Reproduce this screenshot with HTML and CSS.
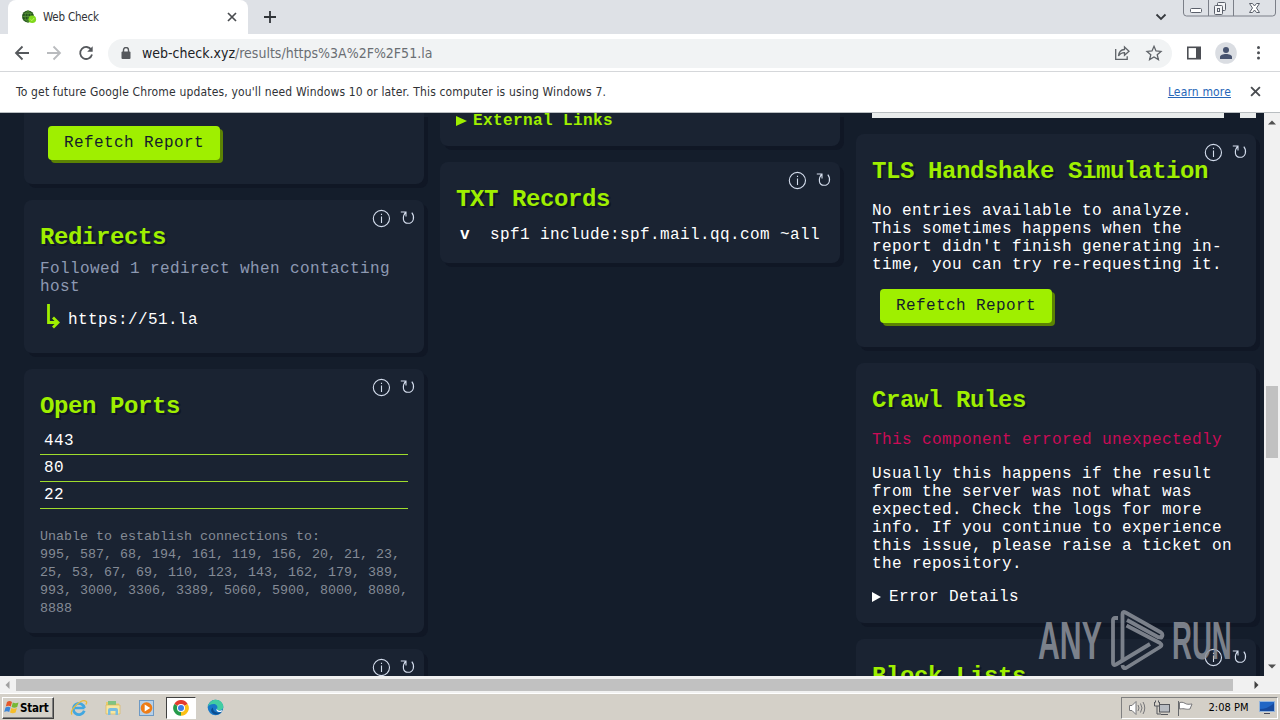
FILE: index.html
```html
<!DOCTYPE html>
<html lang="en">
<head>
  <meta charset="UTF-8" />
  <meta name="viewport" content="width=device-width, initial-scale=1.0"/>
  <title>Web Check</title>
  <link rel="stylesheet" href="styles.css">
</head>
<body>

  <!-- shared icons -->
  <svg class="defs" width="0" height="0">
    <symbol id="card-tools" viewBox="0 0 44 20">
      <g fill="none" stroke="#d3dcec" stroke-width="1.1">
        <circle cx="9.4" cy="9.5" r="8.1"/>
        <path d="M9.5 7.500v6.500M9.5 4.800v1.300"/>
        <path d="M33.800 3.200C30 7.500 30.500 14.300 36 14.300c5.800 0 7-6.500 3.800-10.600M28.800 3h5.200v4.500"/>
      </g>
    </symbol>
    <symbol id="cross" viewBox="0 0 10 10">
      <path d="M1 1l8 8M9 1l-8 8" stroke="#494c50" stroke-width="1.7" fill="none"/>
    </symbol>
  </svg>

  <div class="tab-strip">
    <div class="tab">
      <svg class="favicon" width="16" height="16" viewBox="0 0 16 16">
        <circle cx="7" cy="7.500" r="6" fill="#24521d"/>
        <path d="M1 7.500h12M7 1.500v12M2.500 4.300h9M2.500 10.800h9M7 1.500c-4 3-4 9 0 12c4-3 4-9 0-12" stroke="#5d9c3b" stroke-width=".7" fill="none"/>
        <circle cx="11.300" cy="10.300" r="3.800" fill="#80d81c"/>
        <path d="M9.500 10.400l1.400 1.300l2.300-2.700" stroke="#b9f75c" fill="none"/>
      </svg>
      <span class="tab-title">Web Check</span>
      <svg width="10" height="10"><use href="#cross"/></svg>
    </div>
    <svg class="new-tab" width="12" height="12" viewBox="0 0 12 12"><path d="M6 0v12M0 6h12" stroke="#303439" stroke-width="1.8"/></svg>
    <svg class="tab-search" width="12" height="8" viewBox="0 0 12 8"><path d="M1.500 1.500L6 6l4.500-4.500" stroke="#36393e" stroke-width="1.800" fill="none"/></svg>
    <div class="window-buttons">
      <svg width="93" height="17" viewBox="0 0 93 17" fill="none" stroke="#7b7f88">
        <path d="M.5 0v13q0 3 3 3h86q3 0 3-3V0M25.500 0v16M50.500 0v16"/>
        <rect x="7.500" y="8.500" width="11" height="4" rx="1" fill="#fff" stroke="#5b606b"/>
        <g stroke="#5b606b" fill="#f3f4f6"><rect x="34.500" y="2.500" width="8" height="8" rx="1"/><rect x="31.500" y="5.500" width="8" height="9" rx="1"/><rect x="34.500" y="8.500" width="2" height="3"/></g>
        <path d="M66.500 3.500h3l2 2.500l2-2.500h3l-3 4.500l3 4.500h-3l-2-2.500l-2 2.500h-3l3-4.500z" fill="#fff" stroke="#5b606b"/>
      </svg>
    </div>
  </div>

  <div class="toolbar">
    <svg width="108" height="36" viewBox="0 0 108 36" fill="none" stroke="#55585c" stroke-width="1.800">
      <path d="M29 18H16.500M22.500 11.500L16 18l6.500 6.500"/>
      <path d="M47 18h12.500M53.500 11.500L60 18l-6.500 6.500" stroke="#b9bbbe"/>
      <path d="M91.300 14.800A6 6 0 1 0 92 19.500"/>
      <path d="M92.700 11.200v5.500h-5.500z" fill="#55585c" stroke="none"/>
    </svg>
    <div class="address">
      <svg class="lock" width="10" height="12" viewBox="0 0 10 12"><path d="M2.500 5V3a2.500 2.500 0 0 1 5 0v2" fill="none" stroke="#55585c" stroke-width="1.400"/><rect x=".5" y="4.500" width="9" height="7.500" rx="1" fill="#55585c"/></svg>
      <span class="url">web-check.xyz<span class="path">/results/https%3A%2F%2F51.la</span></span>
      <svg class="address-icons" width="50" height="18" viewBox="0 0 50 18" fill="none" stroke="#5f6368" stroke-width="1.300">
        <path d="M1.700 5v10.300h11.500v-3M4.500 12c.4-4 2.500-6.300 6-6.500V3l4.500 4.200l-4.500 4V8.700c-2.500 0-4.500 1-6 3.300z"/>
        <path d="M40 2.300l2 4.600l5 .5l-3.800 3.300l1.200 4.900l-4.400-2.600l-4.400 2.600l1.200-4.900L33 7.400l5-.5z"/>
      </svg>
    </div>
    <svg width="108" height="36" viewBox="0 0 108 36">
      <rect x="15.800" y="12.300" width="12.400" height="11.400" fill="none" stroke="#4c4f54" stroke-width="1.600"/><path d="M24 12h4.500v12H24z" fill="#4c4f54"/>
      <circle cx="54" cy="18" r="10.800" fill="#dadde2"/><circle cx="54" cy="15" r="3" fill="#47536f"/><path d="M48 24v-2c0-4 12-4 12 0v2z" fill="#47536f"/>
      <g fill="#4c4f54"><circle cx="86.500" cy="12.500" r="1.500"/><circle cx="86.500" cy="17.800" r="1.500"/><circle cx="86.500" cy="23" r="1.500"/></g>
    </svg>
  </div>

  <div class="infobar">
    <span class="info-text">To get future Google Chrome updates, you'll need Windows 10 or later. This computer is using Windows 7.</span>
    <a class="learn">Learn more</a>
    <svg width="11" height="11"><use href="#cross"/></svg>
  </div>

  <div class="viewport">
    <main class="results">
      <div class="column">
        <section class="card cut-refetch">
          <button class="refetch">Refetch Report</button>
        </section>

        <section class="card redirects">
          <svg class="tools" width="44" height="20"><use href="#card-tools"/></svg>
          <h2>Redirects</h2>
          <p class="note">Followed 1 redirect when contacting host</p>
          <div class="redirect">
            <svg width="14" height="27" viewBox="0 0 14 27"><path d="M2.500 1v18.500H11M7 14.500l5 5l-5 5" fill="none" stroke="#9fef00" stroke-width="2.800"/></svg>
            <span>https://51.la</span>
          </div>
        </section>

        <section class="card ports">
          <svg class="tools" width="44" height="20"><use href="#card-tools"/></svg>
          <h2>Open Ports</h2>
          <div class="port">443</div>
          <div class="port">80</div>
          <div class="port">22</div>
          <p class="closed">Unable to establish connections to:<br>
            995, 587, 68, 194, 161, 119, 156, 20, 21, 23, 25, 53, 67, 69, 110, 123, 143, 162, 179, 389, 993, 3000, 3306, 3389, 5060, 5900, 8000, 8080, 8888</p>
        </section>

        <section class="card next">
          <svg class="tools" width="44" height="20"><use href="#card-tools"/></svg>
        </section>
      </div>

      <div class="column">
        <section class="card cut-links">
          <div class="summary"><svg width="12" height="12" viewBox="0 0 12 12"><path d="M0 1l11 5L0 11z" fill="#9fef00"/></svg>External Links</div>
        </section>

        <section class="card txt">
          <svg class="tools" width="44" height="20"><use href="#card-tools"/></svg>
          <h2>TXT Records</h2>
          <div class="record"><b>v</b><span>spf1 include:spf.mail.qq.com ~all</span></div>
        </section>
      </div>

      <div class="column">
        <div class="shot"><span class="shot-main"></span><span class="shot-side"></span></div>

        <section class="card tls">
          <svg class="tools" width="44" height="20"><use href="#card-tools"/></svg>
          <h2>TLS Handshake Simulation</h2>
          <p>No entries available to analyze.<br>This sometimes happens when the report didn't finish generating in-time, you can try re-requesting it.</p>
          <button class="refetch">Refetch Report</button>
        </section>

        <section class="card crawl">
          <h2>Crawl Rules</h2>
          <p class="error">This component errored unexpectedly</p>
          <p>Usually this happens if the result from the server was not what was expected. Check the logs for more info. If you continue to experience this issue, please raise a ticket on the repository.</p>
          <div class="details"><svg width="10" height="10" viewBox="0 0 10 10"><path d="M0 0l9 5L0 10z" fill="#fff"/></svg>Error Details</div>
        </section>

        <section class="card next">
          <svg class="tools" width="44" height="20"><use href="#card-tools"/></svg>
          <h2>Block Lists</h2>
        </section>
      </div>
    </main>

    <div class="scroll-y">
      <svg width="8" height="5" viewBox="0 0 8 5"><path d="M0 4.500L4 .5l4 4z" fill="#505050"/></svg>
      <span class="thumb-y"></span>
      <svg width="8" height="5" viewBox="0 0 8 5"><path d="M0 .5l4 4l4-4z" fill="#505050"/></svg>
    </div>

    <div class="watermark">
      <span class="any">ANY</span>
      <svg width="56" height="62" viewBox="0 0 56 62" fill="none" stroke="#8d929b" stroke-width="3.800" stroke-linejoin="round" stroke-linecap="butt">
        <path d="M8 8H5q-2 0-2 2v43q0 3 3 1.500L40 34"/>
        <path d="M12.500 50V4q0-3 3-1.500L51 22.500q2.500 2 .5 5L48 27L17 10"/>
        <path d="M16.500 15.500L50 33q3 2 0 4L16 58q-3 1-3.500-3"/>
      </svg>
      <span>RUN</span>
    </div>
  </div>

  <div class="scroll-x">
    <svg width="5" height="8" viewBox="0 0 5 8"><path d="M4.500 0L.5 4l4 4z" fill="#a0a0a0"/></svg>
    <span class="thumb-x"></span>
    <svg class="right" width="5" height="8" viewBox="0 0 5 8"><path d="M.5 0l4 4l-4 4z" fill="#404040"/></svg>
  </div>

  <footer class="taskbar">
    <div class="start">
      <svg width="16" height="15" viewBox="0 0 16 15">
        <path d="M3 2c2-1.500 3.500-1 5 0L6.800 6.500c-1.600-1-3.200-1-5 0z" fill="#e4572a"/>
        <path d="M8.800 2.500c2 1 3.600 1 5.700 0L13.200 7c-2 1-3.800 1-5.600 0z" fill="#77b834"/>
        <path d="M1.500 7.500c1.800-1 3.400-1 5 0L5.200 12c-1.500-1-3.200-1-5 0z" fill="#3a85d8"/>
        <path d="M7.300 8c1.800 1 3.600 1 5.600 0l-1.300 4.500c-2 1-3.700 1-5.600 0z" fill="#f6bd2a"/>
      </svg>
      Start
    </div>
    <div class="quick">
      <div class="app">
        <svg width="18" height="18" viewBox="0 0 18 18" fill="none"><path d="M14.500 9H5M14.300 11.800A5.600 5.600 0 1 1 14.500 9" stroke="#42a7e0" stroke-width="2.700"/><path d="M2 15.500C-1 11.500 11-.5 16 2.200c1 .8.500 2.300-.3 3.300" stroke="#e8bb3c" stroke-width="1.300"/></svg>
      </div>
      <div class="app">
        <svg width="18" height="18" viewBox="0 0 18 18"><path d="M2 3h5l1 1.500h7v8H2z" fill="#eacb6c"/><path d="M4 2h8v4H4z" fill="#7fc382"/><path d="M2 6h14v9H2z" fill="#f7e6a0" stroke="#d8b452" stroke-width=".6"/><path d="M4 16v-5q0-2 2-2h6q2 0 2 2v5h-2.500v-4h-5v4z" fill="#79bde0"/></svg>
      </div>
      <div class="app">
        <svg width="18" height="18" viewBox="0 0 18 18"><rect x="1.500" y="1.500" width="14" height="15" fill="#b7d0e8" stroke="#6d99c4"/><circle cx="8.500" cy="9" r="5.800" fill="#ee7c16"/><path d="M6.700 5.500l5.500 3.500l-5.500 3.500z" fill="#fff"/></svg>
      </div>
      <div class="app active">
        <svg width="16" height="16" viewBox="0 0 16 16"><path d="M8 8L1.300 4A7.700 7.700 0 0 1 14.700 4z" fill="#e33b2e"/><path d="M8 8l6.700-4A7.700 7.700 0 0 1 8 15.700z" fill="#fbc116"/><path d="M8 8v7.700A7.700 7.700 0 0 1 1.300 4z" fill="#269b4b"/><circle cx="8" cy="8" r="4" fill="#fff"/><circle cx="8" cy="8" r="3" fill="#3b7de8"/></svg>
      </div>
      <div class="app">
        <svg width="17" height="17" viewBox="0 0 17 17"><circle cx="8.500" cy="8.500" r="7.800" fill="#1878c8"/><path d="M1 7.500C2 2.500 6 .7 9 .7c4 0 7.300 3.300 7.300 7c0 2-1.600 3.500-4 3.500c-2 0-3-.8-2-2C11 7 9 5 6.500 5C4 5 2 6 1 7.500z" fill="#42cda2"/><path d="M6 8.500c-.5 4 4 6.500 8.500 4.500c-2 3-7 3.500-9.500.5C3.500 12 4 9.500 6 8.500z" fill="#0c4d91"/><path d="M9.800 9.500c0 2 3 3 5.500 1.500l-.8 1.700c-3 1-6-.5-4.700-3.200z" fill="#fff"/></svg>
      </div>
    </div>
    <div class="tray">
      <svg width="66" height="18" viewBox="0 0 66 18" fill="none" stroke="#77777a">
        <path d="M1.500 6.500H4l4-4v13l-4-4H1.500z" fill="#fff"/><path d="M10 6q2 3 0 6M12.500 4.500q3 4.500 0 9M15 3q3.500 6 0 12"/>
        <rect x="31.500" y="5.500" width="10" height="7.500" fill="#b8bcc2" stroke="#55575c"/><path d="M33 15.500h7" stroke="#55575c"/><path d="M26.500 3v4h5V3M29 7v8h4M27.500 1.500v2M30.500 1.500v2" stroke="#55575c"/>
        <path d="M50.500 2v15" stroke="#66686b"/><path d="M51.500 3.500c4-1 5 1 7 1.500s3 .2 5.500 0l-2 5c-4 1-5-1-10.500 0z" fill="#fff"/>
      </svg>
      <span class="clock">2:08 PM</span>
      <svg width="16" height="14" viewBox="0 0 16 14"><rect x=".5" y=".5" width="15" height="10" fill="#2166c5" stroke="#93b4dc"/><path d="M1 8q8 0 14-6v8H1z" fill="#174a9e"/><path d="M5 12.500h6" stroke="#445"/></svg>
    </div>
  </footer>

</body>
</html>
```

FILE: styles.css
```css
* {
  box-sizing: border-box;
}

body {
  margin: 0;
  width: 1280px;
  height: 720px;
  display: flex;
  flex-direction: column;
  overflow: hidden;
  background: #fff;
  font-family: 'DejaVu Sans Condensed', 'DejaVu Sans', sans-serif;
  font-size: 12px;
  color: #303236;
}

svg {
  display: block;
  flex: none;
}

.defs {
  position: absolute;
}

/* browser chrome */
.tab-strip {
  display: flex;
  height: 34px;
  flex: none;
  padding-left: 8px;
  background: #dee1e6;
}

.tab {
  display: flex;
  align-items: center;
  width: 240px;
  padding: 0 11px 0 13px;
  background: #fff;
  border-radius: 8px 8px 0 0;
}

.tab-title {
  flex: 1;
  margin-left: 6px;
  font-size: 11.5px;
  letter-spacing: -0.2px;
}

.new-tab {
  margin: 11px 0 0 16px;
}

.tab-search {
  margin: 13px 0 0 auto;
}

.window-buttons {
  margin: 0 4px 0 16px;
}

.toolbar {
  display: flex;
  align-items: center;
  height: 38px;
  flex: none;
  border-bottom: 1px solid #d5d7da;
}

.address {
  flex: 1;
  display: flex;
  align-items: center;
  height: 29px;
  margin-top: 1px;
  padding: 0 8px 0 13px;
  border-radius: 15px;
  background: #f1f3f4;
}

.url {
  flex: 1;
  margin: -1px 0 0 11px;
  font-size: 14px;
  color: #202124;
}

.path {
  color: #6a6e73;
}

.infobar {
  display: flex;
  align-items: center;
  height: 41px;
  flex: none;
  padding: 0 19px 1px 16px;
  border-bottom: 1px solid #b9bec1;
  white-space: nowrap;
  letter-spacing: 0.16px;
}

.info-text {
  flex: 1;
}

.learn {
  margin-right: 19px;
  color: #2666b8;
  text-decoration: underline;
}

/* page */
.viewport {
  position: relative;
  display: flex;
  height: 563px;
  flex: none;
  overflow: hidden;
  background: #141d2b;
  font-family: 'Liberation Mono', monospace;
  font-size: 16px;
  line-height: 18px;
  letter-spacing: 0.4px;
  color: #fff;
}

.results {
  display: grid;
  grid-template-columns: repeat(3, 400px);
  gap: 16px;
  width: 1264px;
  padding-left: 24px;
}

.column {
  display: flex;
  flex-direction: column;
  gap: 16px;
}

.card {
  position: relative;
  flex: none;
  padding: 16px;
  background: #1a2332;
  border-radius: 8px;
  box-shadow: 4px 4px 0 #101725;
}

.tools {
  position: absolute;
  top: 9px;
  right: 8px;
}

h2 {
  margin: 8px 0 2px;
  font-size: 24px;
  line-height: 27px;
  letter-spacing: -0.4px;
  white-space: nowrap;
  color: #9fef00;
  text-shadow: 2px 2px 0 #101725;
}

p {
  margin: 15px 0 0;
}

.refetch {
  display: block;
  width: 172px;
  height: 34px;
  margin: 15px 8px 8px;
  padding: 0;
  border: 0;
  border-radius: 4px;
  background: #9fef00;
  box-shadow: 3px 3px 0 #5c8303;
  color: #141d2b;
  font: inherit;
  letter-spacing: inherit;
}

h2 + p {
  margin-top: 17px;
}

.cut-refetch {
  height: 71px;
  padding-top: 0;
  border-radius: 0 0 8px 8px;
}

.cut-refetch .refetch {
  margin-top: 13px;
}

.redirects {
  height: 153px;
}

h2 + .note {
  margin-top: 9px;
  color: #8d99b2;
}

.redirect {
  display: flex;
  align-items: center;
  gap: 8px;
  margin: 7px 0 0 6px;
}

.redirect span {
  margin-top: 6px;
}

.ports {
  height: 264px;
}

.ports h2 {
  margin-bottom: 8px;
}

.port {
  height: 27px;
  padding: 4px;
  border-bottom: 1px solid #9fdc2c;
}

.closed {
  margin-top: 19px;
  font-size: 13.333px;
  letter-spacing: 0;
  color: #858b96;
}

.next {
  height: 80px;
}

.cut-links {
  height: 33px;
  padding-top: 0;
  border-radius: 0 0 8px 8px;
}

.summary {
  display: flex;
  align-items: center;
  gap: 5px;
  margin-top: -1px;
  font-weight: bold;
  color: #9fef00;
}

.txt {
  height: 101px;
}

.record {
  display: flex;
  gap: 20px;
  margin: 13px 0 0 4px;
  white-space: nowrap;
}

.shot {
  display: flex;
  gap: 16px;
  height: 5px;
  flex: none;
  padding-left: 16px;
}

.shot-main {
  width: 352px;
  background: #e9ecec;
}

.shot-side {
  width: 16px;
  background: #e9ecec;
}

.tls {
  height: 213px;
}

.crawl {
  height: 260px;
}

.crawl p + p {
  margin-top: 16px;
}

.error {
  color: #ca0b56;
}

.details {
  display: flex;
  align-items: center;
  gap: 7px;
  margin-top: 15px;
}

.scroll-y {
  display: flex;
  flex-direction: column;
  align-items: center;
  justify-content: space-between;
  width: 16px;
  padding: 7px 0;
  background: #f1f1f1;
}

.thumb-y {
  width: 12px;
  height: 72px;
  margin-top: 55px;
  background: #c1c1c1;
}

.watermark {
  position: absolute;
  left: 1038px;
  top: 497px;
  display: flex;
  align-items: center;
  opacity: 0.85;
}

.watermark span {
  width: 63px;
  font-family: 'Liberation Sans', sans-serif;
  font-size: 53px;
  font-weight: bold;
  line-height: 62px;
  letter-spacing: 0;
  color: #8d929b;
  transform: scaleX(0.52);
  transform-origin: 0 50%;
}

.watermark .any {
  transform: scaleX(0.57);
}

.watermark svg {
  margin: 0 6px 0 9px;
}

.scroll-x {
  display: flex;
  align-items: center;
  height: 17px;
  flex: none;
  padding: 0 21px 0 5px;
  background: #f1f1f1;
}

.thumb-x {
  width: 1217px;
  height: 12px;
  margin-left: 6px;
  background: #c1c1c1;
}

.right {
  margin-left: auto;
}

/* taskbar */
.taskbar {
  display: flex;
  align-items: center;
  height: 27px;
  flex: none;
  padding: 1px 2px 0;
  border-top: 1px solid #fff;
  background: #d4d0c8;
  color: #000;
}

.start {
  display: flex;
  align-items: center;
  width: 52px;
  height: 22px;
  padding-left: 1px;
  border: 1px solid;
  border-color: #fff #404040 #404040 #fff;
  box-shadow: inset -1px -1px 0 #808080;
  font-size: 11.5px;
  font-weight: bold;
  letter-spacing: -0.2px;
}

.quick {
  display: flex;
  gap: 4px;
  margin-left: 10px;
}

.app {
  display: flex;
  align-items: center;
  justify-content: center;
  width: 30px;
  height: 22px;
}

.active {
  background: #fff;
  border: 1px solid;
  border-color: #404040 #fff #fff #404040;
}

.tray {
  display: flex;
  align-items: center;
  height: 22px;
  width: 157px;
  margin-left: auto;
  padding: 0 2px 0 6px;
  border: 1px solid;
  border-color: #808080 #fff #fff #808080;
}

.clock {
  margin: 0 auto;
  padding-left: 4px;
  font-size: 11px;
  white-space: nowrap;
}
```
